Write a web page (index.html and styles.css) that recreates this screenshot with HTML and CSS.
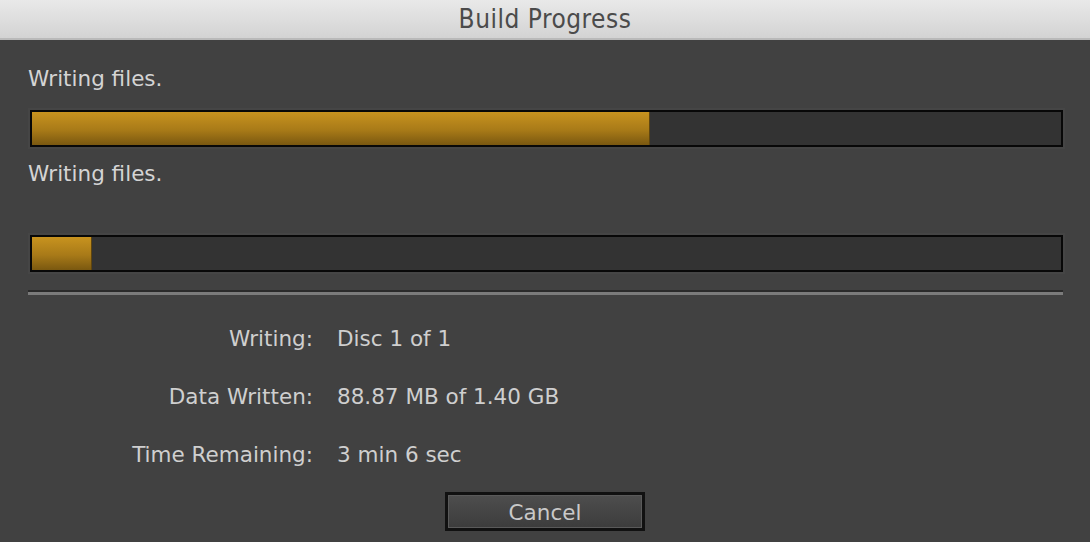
FILE: index.html
```html
<!DOCTYPE html>
<html lang="en">
<head>
    <meta charset="UTF-8">
    <title>Build Progress</title>
    <link rel="stylesheet" href="styles.css">
</head>
<body>
    <div class="title-bar">Build Progress</div>

    <div class="dialog">
        <div class="status">Writing files.</div>
        <div class="progress progress-main">
            <div class="progress-fill" style="width: 60%"></div>
        </div>

        <div class="status status-sub">Writing files.</div>
        <div class="progress progress-sub">
            <div class="progress-fill" style="width: 5.7%"></div>
        </div>

        <div class="separator"></div>

        <div class="details">
            <div class="detail-label">Writing:</div>
            <div class="detail-value">Disc 1 of 1</div>
            <div class="detail-label">Data Written:</div>
            <div class="detail-value">88.87 MB of 1.40 GB</div>
            <div class="detail-label">Time Remaining:</div>
            <div class="detail-value">3 min 6 sec</div>
        </div>

        <div class="button-row">
            <button class="cancel-btn">Cancel</button>
        </div>
    </div>
</body>
</html>
```

FILE: styles.css
```css
body {
    margin: 0;
    background-color: #414141;
    font-family: 'DejaVu Sans', 'Open Sans', sans-serif;
    height: 542px;
    overflow: hidden;
}
.title-bar {
    height: 38px;
    line-height: 38px;
    text-align: center;
    font-family: 'DejaVu Sans Condensed', 'Liberation Sans', sans-serif;
    font-size: 26px;
    letter-spacing: 0.5px;
    color: #4b4b4b;
    background: linear-gradient(#e9e9e9, #d3d3d3);
    border-bottom: 2px solid #b9b9b9;
}
.dialog {
    padding: 0 27px 0 28px;
}
.status {
    color: #d4d4d4;
    font-size: 21.5px;
    height: 28px;
    line-height: 28px;
    margin-top: 25px;
}
.status-sub {
    margin-top: 13px;
}
.progress {
    margin-top: 17px;
    margin-left: 2px;
    height: 33px;
    background-color: #333333;
    border: 2px solid #080808;
    box-shadow: 0 0 0 2px #454545;
}
.progress-sub {
    margin-top: 47px;
}
.progress-fill {
    height: 100%;
    background: linear-gradient(#c8931f, #a87a18 55%, #7a5810);
    border-right: 1px solid #5e4510;
}
.separator {
    margin-top: 18px;
    height: 2px;
    background-color: #2a2a2a;
    border-bottom: 3px solid #7b7b7b;
}
.details {
    display: grid;
    grid-template-columns: 285px auto;
    column-gap: 24px;
    row-gap: 30px;
    margin-top: 30px;
    font-size: 21.5px;
    line-height: 28px;
    color: #cfcfcf;
}
.detail-label {
    text-align: right;
}
.button-row {
    display: flex;
    justify-content: center;
    margin-top: 23px;
    padding-right: 1px;
}
.cancel-btn {
    width: 200px;
    height: 39px;
    background: linear-gradient(#4e4e4e, #3c3c3c);
    border: 3px solid #111111;
    box-shadow: inset 0 0 0 1px #5a5a5a;
    color: #c9c9c9;
    font-family: 'DejaVu Sans', 'Open Sans', sans-serif;
    font-size: 21.5px;
    padding: 3px 0 0 0;
    line-height: 30px;
}
```
